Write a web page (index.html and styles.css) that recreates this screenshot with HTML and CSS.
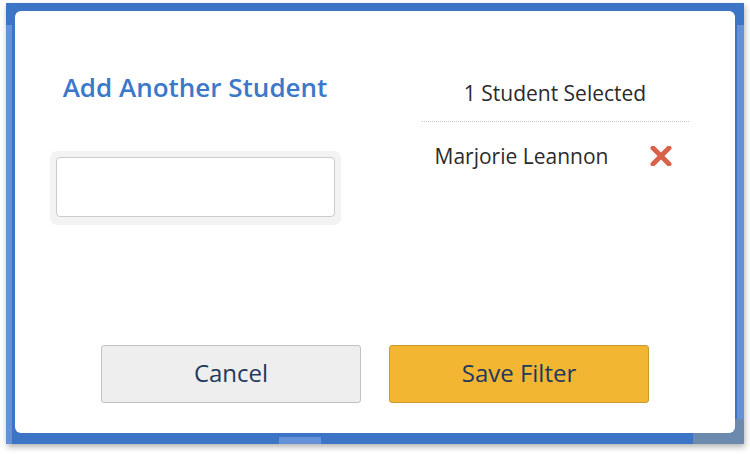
FILE: index.html
```html
<!DOCTYPE html>
<html>
<head>
<meta charset="utf-8">
<link rel="stylesheet" href="styles.css">
</head>
<body>
<div class="frame">
  <div class="modal">
    <div class="columns">
      <div class="col col-left">
        <h2 class="title">Add Another Student</h2>
        <div class="input-wrap"><input class="input" type="text"></div>
      </div>
      <div class="col col-right">
        <div class="selected-head">1 Student Selected</div>
        <div class="student-row">
          <span class="student-name">Marjorie Leannon</span>
          <svg class="remove" width="22" height="20" viewBox="0 0 22 20">
            <path d="M3 2 L19 18 M19 2 L3 18" stroke="#d8634a" stroke-width="5" stroke-linecap="round" fill="none"/>
          </svg>
        </div>
      </div>
    </div>
    <div class="actions">
      <button class="btn btn-cancel">Cancel</button>
      <button class="btn btn-save">Save Filter</button>
    </div>
  </div>
</div>
</body>
</html>
```

FILE: styles.css
```css
html, body {
  margin: 0;
  padding: 0;
  background: #ffffff;
}
body {
  font-family: "Open Sans", "Noto Sans", sans-serif;
  width: 750px;
  height: 454px;
  overflow: hidden;
}
.frame {
  margin: 3px 0 0 6px;
  width: 738px;
  height: 441px;
  box-sizing: border-box;
  padding: 8px 9px 11px 9px;
  background:
    linear-gradient(#6b8aae, #6b8aae) 687px 416px / 51px 25px no-repeat,
    linear-gradient(#6592d6, #6592d6) 273px 434px / 42px 7px no-repeat,
    linear-gradient(#6592d6, #6592d6) 0 22px / 6px 419px no-repeat,
    linear-gradient(#6592d6, #6592d6) 731px 22px / 7px 394px no-repeat,
    #3d75c6;
  box-shadow: 1px 3px 6px rgba(0, 0, 0, 0.3);
}
.modal {
  background: #ffffff;
  height: 422px;
  border-radius: 6px;
  display: flex;
  flex-direction: column;
  box-sizing: border-box;
  padding-bottom: 30px;
}
.columns {
  display: grid;
  grid-template-columns: 1fr 1fr;
}
.col {
  display: flex;
  flex-direction: column;
  align-items: center;
}
.title {
  margin: 59px 0 0 0;
  font-size: 26px;
  line-height: 34px;
  font-weight: 600;
  color: #3b78c9;
}
.input-wrap {
  margin-top: 47px;
  width: 291px;
  box-sizing: border-box;
  padding: 6px 6px 8px 6px;
  background: #f3f3f3;
  border-radius: 7px;
}
.input {
  display: block;
  width: 100%;
  height: 60px;
  box-sizing: border-box;
  border: 1px solid #cbcbcb;
  border-radius: 4px;
  background: #ffffff;
  margin: 0;
}
.col-right {
  padding-top: 68px;
}
.selected-head {
  width: 267px;
  text-align: center;
  font-size: 21px;
  line-height: 28px;
  color: #2b2b2b;
  padding-bottom: 14px;
  border-bottom: 1px dotted #c4c4c4;
}
.student-row {
  width: 267px;
  box-sizing: border-box;
  display: flex;
  align-items: center;
  justify-content: space-between;
  padding: 19px 17px 0 13px;
}
.student-name {
  font-size: 21px;
  line-height: 30px;
  color: #2b2b2b;
}
.remove {
  display: block;
}
.actions {
  margin-top: auto;
  display: flex;
  justify-content: center;
  gap: 28px;
}
.btn {
  width: 260px;
  height: 58px;
  box-sizing: border-box;
  border-radius: 3px;
  font-family: "Open Sans", "Noto Sans", sans-serif;
  font-size: 24px;
  color: #1e3a5e;
  padding: 0 0 3px 0;
}
.btn-cancel {
  background: #eeeeee;
  border: 1px solid #c2c2c2;
}
.btn-save {
  background: #f2b632;
  border: 1px solid #c99a2c;
}
```
